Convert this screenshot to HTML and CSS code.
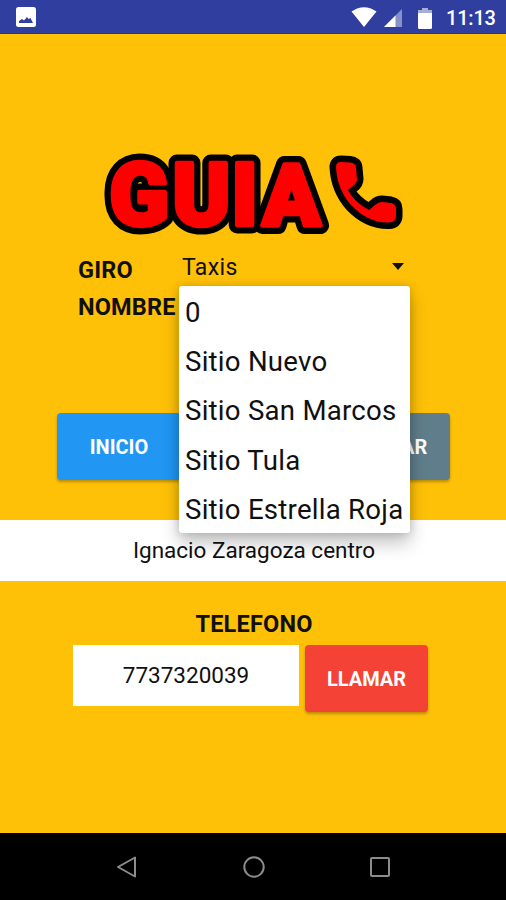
FILE: index.html
```html
<!DOCTYPE html>
<html lang="es">
<head>
<meta charset="utf-8">
<title>Guia</title>
<link rel="stylesheet" href="styles.css">
</head>
<body>
<header class="status">
  <svg class="photo" viewBox="0 0 20 20" width="20" height="20"><rect width="20" height="20" rx="2.5" fill="#fff"/><path d="M3 16V14l3-2 2 1.500 3-3.500 1.500 2 2-1 2.500 5z" fill="#303f9f"/></svg>
  <svg class="wifi" viewBox="0 0 26 20" width="26" height="20"><path d="M.5 4.500Q13-4 25.500 4.500L13 20z" fill="#fff"/></svg>
  <svg class="signal" viewBox="0 0 18 18" width="18" height="18"><path d="M18 0v18H0z" fill="#8791c7"/><path d="M11.500 6.500V18H0z" fill="#fff"/></svg>
  <svg class="battery" viewBox="0 0 14 21" width="14" height="21"><path d="M4 0h6v2h4v5H0V2h4z" fill="#a6aed8"/><path d="M0 5h14v14.500q0 1.500-1.500 1.500h-11Q0 21 0 19.500z" fill="#fff"/></svg>
  <span class="clock">11:13</span>
</header>
<main>
  <svg class="logo" viewBox="0 0 310 94" width="310" height="94">
    <defs>
      <text id="word" y="77.500" x="9.500 72.500 131.500 162.500">GUI<tspan class="narrow">A</tspan></text>
      <path id="phone" d="M236 20Q236 15 241 15L250 15.500Q256 16 256 21L257 32Q257 36 253 39L248 43Q254 55 269 63L275 58Q278 55 282 55L291 56Q296 57 296 62L296 69Q296 75 289 75.500Q268 76 251 58Q237 42 236 20Z"/>
    </defs>
    <g class="outline"><use href="#word"/><use class="handset-outline" href="#phone"/></g>
    <g class="fill"><use href="#word"/><use class="handset" href="#phone"/></g>
  </svg>
  <section class="form">
    <div class="field"><b class="label">GIRO</b><span class="select">Taxis<i class="caret"></i></span></div>
    <div class="field name"><b class="label">NOMBRE</b>
      <ul class="menu"><li>0</li><li>Sitio Nuevo</li><li>Sitio San Marcos</li><li>Sitio Tula</li><li>Sitio Estrella Roja</li></ul>
    </div>
  </section>
  <div class="actions"><button class="btn home">INICIO</button><button class="btn search">BUSCAR</button></div>
  <div class="address">Ignacio Zaragoza centro</div>
  <h2 class="heading">TELEFONO</h2>
  <div class="call"><div class="number">7737320039</div><button class="btn dial">LLAMAR</button></div>
</main>
<nav class="nav">
  <svg viewBox="0 0 24 24" width="24" height="24"><path d="M20 2.500v19L3 12z"/></svg>
  <svg viewBox="0 0 24 24" width="24" height="24"><circle cx="12" cy="12" r="9.700"/></svg>
  <svg viewBox="0 0 24 24" width="24" height="24"><rect x="3" y="3" width="18" height="18" rx="1"/></svg>
</nav>
</body>
</html>
```
FILE: styles.css
```css
* { box-sizing: border-box; }
body { margin: 0; width: 506px; height: 900px; overflow: hidden; background: #ffc107; color: #101010; font-family: Roboto, sans-serif; display: flex; flex-direction: column; }
svg { display: block; flex: none; }
.status { height: 34px; background: #303f9f; border-bottom: 1px solid #253594; display: flex; align-items: flex-start; padding: 0 0 0 16px; flex: none; }
.photo { margin-top: 7px; }
.wifi { margin: 7px 0 0 315px; }
.signal { margin: 9px 0 0 7px; }
.battery { margin: 8px 0 0 16px; }
.clock { margin: 6px 0 0 14px; color: #fff; font-size: 20px; line-height: 24px; font-weight: 500; letter-spacing: -.2px; }
main { height: 799px; flex: none; padding-top: 113px; }
.logo { margin-left: 100px; overflow: visible; }
#word { font: 900 87px Roboto, sans-serif; }
.narrow { font-size: 85px; }
.outline { fill: #000; stroke: #000; stroke-width: 17px; stroke-linejoin: round; }
.handset-outline { stroke-width: 13px; }
.fill { fill: #f00; stroke: #f00; stroke-width: 4.500px; stroke-linejoin: round; }
.handset { stroke-width: 0; }
.form { padding: 10px 78px 0; height: 171px; }
.field { height: 37px; display: flex; align-items: center; }
.label { width: 104px; font-size: 23.500px; font-weight: 700; letter-spacing: .15px; padding-top: 1px; flex: none; }
.select { flex: none; width: 222px; display: flex; align-items: center; justify-content: space-between; font-size: 23px; letter-spacing: .4px; margin-top: -4px; }
.caret { border: 6.500px solid transparent; border-top: 7px solid #111; border-bottom: 0; margin-top: -2px; }
.name { position: relative; }
.menu { position: absolute; left: 101px; top: -2px; z-index: 2; width: 231px; height: 247px; margin: 0; padding: 2px 6px; list-style: none; background: #fff; border-radius: 3px; box-shadow: 0 10px 18px rgba(0,0,0,.24), 0 0 9px rgba(0,0,0,.16); font-size: 27.600px; letter-spacing: .25px; white-space: nowrap; }
.menu li { height: 49.200px; line-height: 49px; }
.actions { display: flex; margin: 1px 56px 0 57px; height: 67px; }
.btn { border: 0; padding: 0; border-radius: 4px; color: #fff; font: 700 20px Roboto, sans-serif; height: 67px; box-shadow: 0 2px 3px rgba(0,0,0,.28); }
.home { width: 124px; background: #2196f3; }
.search { width: 123px; margin-left: auto; background: #607d8b; }
.address { margin-top: 40px; height: 61px; background: #fff; text-align: center; font-size: 22.500px; line-height: 61px; padding-left: 2px; }
.heading { margin: 29px 0 0; text-align: center; font-size: 23.500px; line-height: 28px; padding-left: 2px; letter-spacing: .2px; }
.call { display: flex; margin: 7px 78px 0 73px; gap: 6px; }
.number { width: 226px; height: 61px; background: #fff; text-align: center; font-size: 22.500px; line-height: 61px; }
.dial { width: 123px; background: #f44336; }
.nav { height: 67px; flex: none; background: #000; display: flex; justify-content: center; align-items: center; gap: 102.500px; padding-left: 1px; }
.nav svg { fill: none; stroke: #8c8c8c; stroke-width: 2; stroke-linejoin: round; }
```
